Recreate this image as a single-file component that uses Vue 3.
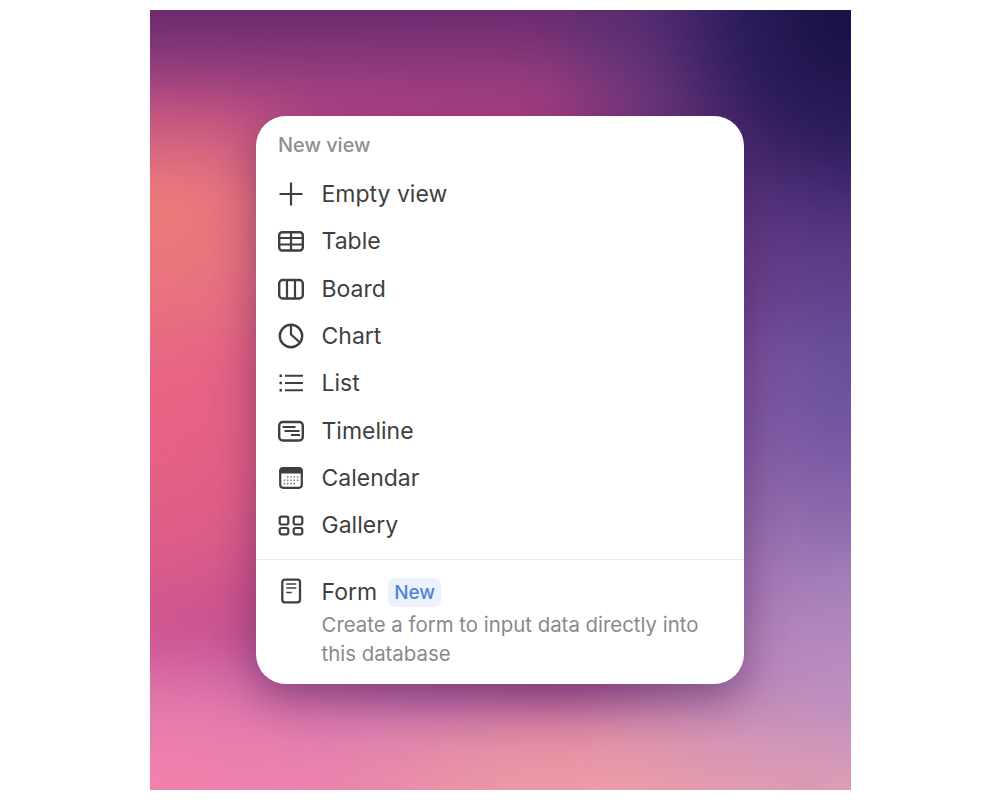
<script setup>
const items = [
  { id: 'empty', label: 'Empty view' },
  { id: 'table', label: 'Table' },
  { id: 'board', label: 'Board' },
  { id: 'chart', label: 'Chart' },
  { id: 'list', label: 'List' },
  { id: 'timeline', label: 'Timeline' },
  { id: 'calendar', label: 'Calendar' },
  { id: 'gallery', label: 'Gallery' },
]
</script>

<template>
  <div class="page">
    <div class="wallpaper">
      <section class="menu">
        <header class="title">New view</header>
        <ul class="rows">
          <li v-for="item in items" :key="item.id" class="row">
            <svg class="icon" viewBox="0 0 28 28" fill="none" stroke="currentColor" stroke-width="2.4">
              <template v-if="item.id === 'empty'">
                <path d="M14 2.500v23M2.500 14h23" stroke-width="2.200" />
              </template>
              <template v-else-if="item.id === 'table'">
                <rect x="2.200" y="5.200" width="23.600" height="18.300" rx="3" />
                <path d="M2 11h24M2 17.500h24M14 5.200v18.300" stroke-width="2.200" />
              </template>
              <template v-else-if="item.id === 'board'">
                <rect x="2.200" y="5" width="23.600" height="18.500" rx="3.500" />
                <path d="M10 5v18.500M18 5v18.500" stroke-width="2.200" />
              </template>
              <template v-else-if="item.id === 'chart'">
                <circle cx="14" cy="14" r="11.200" />
                <path d="M14 3v9.500l9 8" stroke-width="2.200" />
              </template>
              <template v-else-if="item.id === 'list'">
                <path d="M8 6.700h18M8 14h18M8 21.300h18" stroke-width="2.100" />
                <path d="M2.500 6.700h2.500M2.500 14h2.500M2.500 21.300h2.500" stroke-width="2.600" />
              </template>
              <template v-else-if="item.id === 'timeline'">
                <rect x="2.200" y="5" width="23.600" height="18.500" rx="3.500" />
                <path d="M5.500 10h13M7.500 14h15M14 18h9" stroke-width="1.800" />
              </template>
              <template v-else-if="item.id === 'calendar'">
                <rect x="3.200" y="4.200" width="21.600" height="19.600" rx="3" stroke-width="2.200" />
                <path d="M2.500 7q0-3.500 3.500-3.500h16q3.500 0 3.500 3.500v2.500h-23z" fill="currentColor" stroke="none" />
                <path
                  class="dots"
                  d="M10 13h1.400M13.300 13h1.400M16.600 13h1.400M19.900 13h1.400M6.800 16.300h1.400M10 16.300h1.400M13.300 16.300h1.400M16.600 16.300h1.400M19.900 16.300h1.400M6.800 19.600h1.400M10 19.600h1.400M13.300 19.600h1.400M16.600 19.600h1.400"
                  stroke-width="1.600"
                />
              </template>
              <template v-else>
                <rect x="2.700" y="5.700" width="8.600" height="7.800" rx="2" stroke-width="2.200" />
                <rect x="16.700" y="5.700" width="8.600" height="7.800" rx="2" stroke-width="2.200" />
                <rect x="2.700" y="17" width="8.600" height="6.300" rx="2" stroke-width="2.200" />
                <rect x="16.700" y="17" width="8.600" height="6.300" rx="2" stroke-width="2.200" />
              </template>
            </svg>
            <span>{{ item.label }}</span>
          </li>
        </ul>
        <div class="form">
          <svg class="icon" viewBox="0 0 28 28" fill="none" stroke="currentColor" stroke-width="2.300">
            <rect x="5.300" y="2.700" width="17.700" height="22.600" rx="2.500" />
            <path d="M9.300 7h10M9.300 11h10M9.300 15.500h5.500" stroke-width="1.600" />
          </svg>
          <div class="form-body">
            <div class="form-head">
              <span>Form</span>
              <span class="badge">New</span>
            </div>
            <p class="desc">Create a form to input data directly into this database</p>
          </div>
        </div>
      </section>
    </div>
  </div>
</template>

<style>
html, body { margin: 0; background: #fff; }
</style>

<style scoped>
.page {
  width: 1000px;
  height: 800px;
  padding: 10px 149px 10px 150px;
  box-sizing: border-box;
  font-family: Inter, "Liberation Sans", sans-serif;
}
.wallpaper {
  position: relative;
  overflow: hidden;
  height: 780px;
  display: flex;
  align-items: center;
  justify-content: center;
  padding-right: 1px;
}
.wallpaper::before {
  content: "";
  position: absolute;
  inset: -60px;
  filter: blur(18px);
  background:
    radial-gradient(320px 360px at 761px 60px, #160e42 0%, #2c1c5c 35%, rgba(70, 45, 115, .6) 65%, rgba(90, 50, 125, 0) 100%),
    linear-gradient(180deg, #66296e 0, #6a2b70 62px, rgba(130, 54, 118, .85) 110px, rgba(170, 62, 125, .45) 165px, rgba(190, 70, 120, 0) 235px),
    radial-gradient(250px 300px at 761px 420px, #67509c 0%, rgba(103, 80, 156, 0) 100%),
    radial-gradient(320px 300px at 761px 640px, #c095c8 0%, rgba(192, 149, 200, .6) 50%, rgba(185, 142, 196, 0) 100%),
    radial-gradient(200px 170px at 70px 260px, #ec7c7a 0%, rgba(236, 124, 122, .6) 55%, rgba(236, 124, 122, 0) 100%),
    radial-gradient(350px 170px at 60px 850px, #f484ae 0%, rgba(240, 132, 176, .8) 50%, rgba(240, 132, 180, 0) 100%),
    radial-gradient(460px 130px at 540px 860px, #f2a0a6 0%, rgba(242, 160, 166, .8) 55%, rgba(240, 158, 166, 0) 100%),
    radial-gradient(300px 200px at 761px 840px, #e4a4b0 0%, rgba(223, 162, 180, 0) 100%),
    radial-gradient(330px 280px at 60px 440px, #ea6482 0%, rgba(234, 100, 130, .7) 50%, rgba(231, 95, 126, 0) 100%),
    radial-gradient(320px 120px at 300px 780px, #c070b0 0%, rgba(192, 112, 176, 0) 100%),
    linear-gradient(90deg, #cc5496 0%, #a84088 55%, #7a4596 100%);
}
.menu {
  position: relative;
  width: 488px;
  height: 568px;
  background: #fff;
  border-radius: 30px;
  box-shadow: 0 14px 40px rgba(50, 20, 70, .42);
  color: #3f3f3f;
  font-size: 23px;
  overflow: hidden;
}
.title {
  padding: 16px 22px 0;
  height: 38.400px;
  line-height: 26px;
  font-size: 19.900px;
  font-weight: 500;
  color: #8f8f8f;
}
.rows {
  list-style: none;
  margin: 0;
  padding: 0 0 10px;
  border-bottom: 1px solid #ececec;
}
.row {
  height: 47.300px;
  padding: 0 22px 0 21px;
  display: flex;
  align-items: center;
  gap: 16.500px;
}
.icon {
  width: 28px;
  height: 28px;
  flex: none;
  color: #3f3f3f;
}
.dots { color: #777; }
.form {
  display: flex;
  gap: 16.500px;
  padding: 17.600px 40px 0 21px;
}
.form-head {
  display: flex;
  align-items: center;
  gap: 11px;
  height: 30px;
}
.badge {
  height: 29px;
  line-height: 30px;
  padding: 0 6px;
  border-radius: 6px;
  background: #ebf2fb;
  color: #4f86d0;
  font-size: 19px;
  font-weight: 500;
}
.desc {
  margin: 3px 0 0;
  font-size: 20.400px;
  line-height: 29px;
  color: #8a8a8a;
}
</style>
